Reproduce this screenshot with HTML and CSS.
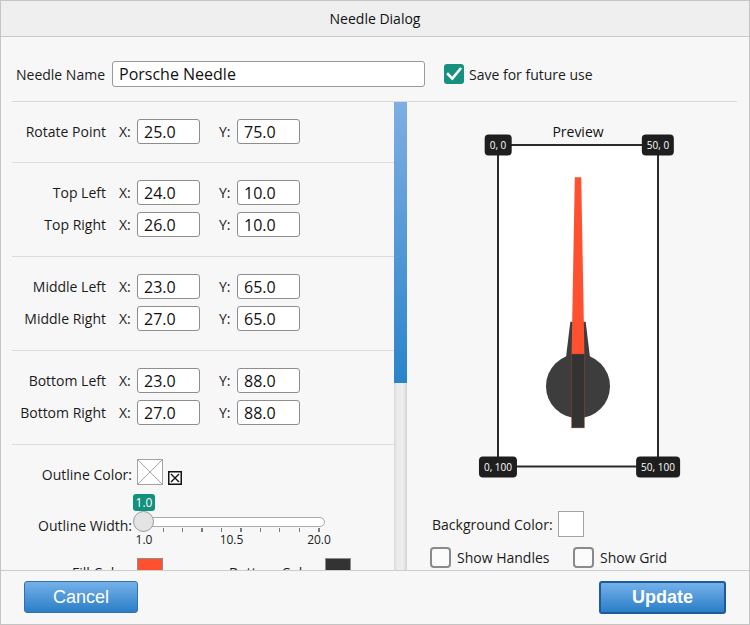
FILE: index.html
```html
<!DOCTYPE html>
<html>
<head>
<meta charset="utf-8">
<title>Needle Dialog</title>
<link rel="stylesheet" href="styles.css">
</head>
<body>
<div class="window">
  <div class="titlebar">Needle Dialog</div>
  <div class="content">
    <div class="name-row">
      <span class="name-label">Needle Name</span>
      <input class="name-input" type="text" value="Porsche Needle">
      <span class="check checked">
        <svg width="20" height="20" viewBox="0 0 20 20"><path d="M4 10.2 L8.3 14.6 L16.2 5" fill="none" stroke="#fff" stroke-width="2.6" stroke-linecap="square"/></svg>
      </span>
      <span class="check-text">Save for future use</span>
    </div>
    <div class="main">
      <div class="left">
        <div class="section first">
          <div class="row"><span class="lbl">Rotate Point</span><span class="axis">X:</span><input class="field" value="25.0"><span class="axis y">Y:</span><input class="field" value="75.0"></div>
        </div>
        <div class="section">
          <div class="row"><span class="lbl">Top Left</span><span class="axis">X:</span><input class="field" value="24.0"><span class="axis y">Y:</span><input class="field" value="10.0"></div>
          <div class="row"><span class="lbl">Top Right</span><span class="axis">X:</span><input class="field" value="26.0"><span class="axis y">Y:</span><input class="field" value="10.0"></div>
        </div>
        <div class="section">
          <div class="row"><span class="lbl">Middle Left</span><span class="axis">X:</span><input class="field" value="23.0"><span class="axis y">Y:</span><input class="field" value="65.0"></div>
          <div class="row"><span class="lbl">Middle Right</span><span class="axis">X:</span><input class="field" value="27.0"><span class="axis y">Y:</span><input class="field" value="65.0"></div>
        </div>
        <div class="section">
          <div class="row"><span class="lbl">Bottom Left</span><span class="axis">X:</span><input class="field" value="23.0"><span class="axis y">Y:</span><input class="field" value="88.0"></div>
          <div class="row"><span class="lbl">Bottom Right</span><span class="axis">X:</span><input class="field" value="27.0"><span class="axis y">Y:</span><input class="field" value="88.0"></div>
        </div>
        <div class="section last">
          <div class="color-row">
            <span class="lbl2">Outline Color:</span>
            <span class="swatch none">
              <svg width="26" height="26" viewBox="0 0 26 26"><rect x="0.5" y="0.5" width="25" height="25" fill="#fff" stroke="#a3a3a3"/><path d="M1 1 L25 25 M25 1 L1 25" stroke="#a8a8a8" stroke-width="1"/></svg>
            </span>
            <span class="clear-icon">
              <svg width="14" height="14" viewBox="0 0 14 14"><rect x="0.75" y="0.75" width="12.5" height="12.5" fill="#fff" stroke="#111" stroke-width="1.5"/><path d="M3 3 L11 11 M11 3 L3 11" stroke="#111" stroke-width="1.4"/></svg>
            </span>
          </div>
          <div class="badge">1.0</div>
          <div class="slider-row">
            <span class="lbl2 slider-label">Outline Width:</span>
            <div class="slider">
              <div class="track"></div>
              <div class="ticks"></div>
              <div class="thumb"></div>
            </div>
          </div>
          <div class="tick-labels"><span>1.0</span><span>10.5</span><span>20.0</span></div>
          <div class="fill-row">
            <span class="lbl2 low">Fill Color:</span>
            <span class="swatch fill"></span>
            <span class="lbl3 low">Bottom Color:</span>
            <span class="swatch bottom"></span>
          </div>
        </div>
      </div>
      <div class="scrollbar"><div class="scroll-thumb"></div></div>
      <div class="right">
        <div class="preview-title">Preview</div>
        <div class="canvas">
          <svg width="166" height="328" viewBox="0 0 166 328">
            <rect x="3" y="3" width="160" height="321.5" fill="#fff" stroke="#2b2b2b" stroke-width="2"/>
            <g transform="translate(3 3) scale(3.2 3.215)">
              <polygon points="22.6,55 27.4,55 28.8,66.5 21.2,66.5" fill="#3d3d3d"/>
              <circle cx="25" cy="75" r="10" fill="#3d3d3d"/>
              <polygon points="24,10 26,10 27,65 23,65" fill="#ff5130"/>
              <rect x="23" y="65" width="4" height="23" fill="#333333" stroke="#b9442f" stroke-width="0.12"/>
            </g>
          </svg>
          <span class="handle tl">0, 0</span>
          <span class="handle tr">50, 0</span>
          <span class="handle bl">0, 100</span>
          <span class="handle br">50, 100</span>
        </div>
        <div class="bg-row">
          <span class="bg-label">Background Color:</span>
          <span class="swatch white"></span>
        </div>
        <div class="opt-row">
          <span class="opt first-opt"><span class="box"></span><span class="opt-text">Show Handles</span></span>
          <span class="opt"><span class="box"></span><span class="opt-text">Show Grid</span></span>
        </div>
      </div>
    </div>
  </div>
  <div class="footer">
    <button class="btn cancel">Cancel</button>
    <button class="btn update">Update</button>
  </div>
</div>
</body>
</html>
```

FILE: styles.css
```css
* { box-sizing: border-box; }

body {
  margin: 0;
  background: #ffffff;
}

.window {
  width: 750px;
  height: 625px;
  border: 1px solid #c4c4c4;
  background: #f7f7f7;
  display: flex;
  flex-direction: column;
  font-family: "Open Sans", "Noto Sans", sans-serif;
  font-size: 14px;
  color: #1b1b1b;
  overflow: hidden;
}

.titlebar {
  flex: none;
  height: 36px;
  background: #efefef;
  border-bottom: 1px solid #c8c8c8;
  text-align: center;
  line-height: 36px;
  color: #111;
}

.content {
  flex: 1;
  min-height: 0;
  display: flex;
  flex-direction: column;
  padding: 0 12px 0 11px;
}

/* ---------- name row ---------- */
.name-row {
  flex: none;
  height: 65px;
  display: flex;
  align-items: center;
  padding: 24px 0 14px;
  border-bottom: 1px solid #dadada;
}

.name-label {
  width: 100px;
  padding-left: 4px;
  white-space: nowrap;
}

.name-input {
  width: 313px;
  height: 26px;
  border: 1px solid #9a9a9a;
  border-radius: 3px;
  background: #fff;
  font-family: "Open Sans", "Noto Sans", sans-serif;
  font-size: 16px;
  color: #111;
  padding: 0 6px;
  margin: 0;
  outline: none;
}

.check {
  width: 20px;
  height: 20px;
  margin-left: 19px;
  border-radius: 3px;
  display: flex;
  align-items: center;
  justify-content: center;
}

.check.checked {
  background: #16907f;
}

.check-text {
  margin-left: 5px;
  white-space: nowrap;
}

/* ---------- main ---------- */
.main {
  flex: 1;
  min-height: 0;
  display: flex;
}

.left {
  width: 382px;
  flex: none;
  overflow: hidden;
}

.section {
  display: flex;
  flex-direction: column;
  gap: 7px;
  padding: 17px 0 19px;
  border-bottom: 1px solid #dcdcdc;
}

.section.first {
  padding-bottom: 18px;
}

.section.last {
  border-bottom: none;
  padding: 14px 0 0;
  gap: 0;
}

.row {
  display: flex;
  align-items: center;
  height: 25px;
}

.lbl {
  width: 94px;
  text-align: right;
  white-space: nowrap;
}

.axis {
  width: 18px;
  margin-left: 13px;
}

.axis.y {
  margin-left: 19px;
}

.field {
  width: 63px;
  height: 25px;
  margin: 0;
  border: 1px solid #8e8e8e;
  border-radius: 3px;
  background: #fff;
  font-family: "Open Sans", "Noto Sans", sans-serif;
  font-size: 16px;
  color: #111;
  padding: 0 6px;
  outline: none;
}

.color-row {
  display: flex;
  align-items: flex-end;
  height: 26px;
}

.lbl2 {
  width: 120px;
  text-align: right;
  line-height: 20px;
  white-space: nowrap;
}

.swatch {
  width: 26px;
  height: 26px;
  margin-left: 5px;
  flex: none;
  display: block;
}

.swatch svg { display: block; }

.clear-icon {
  width: 14px;
  height: 14px;
  margin-left: 5px;
  display: block;
}

.clear-icon svg { display: block; }

.badge {
  margin-top: 9px;
  margin-left: 121px;
  width: 22px;
  height: 17px;
  border-radius: 3px;
  background: #12917f;
  color: #fff;
  font-size: 12px;
  line-height: 17px;
  text-align: center;
}

.slider-row {
  display: flex;
  align-items: flex-start;
  height: 21px;
}

.slider-label {
  margin-top: 5px;
}

.slider {
  position: relative;
  width: 192px;
  height: 21px;
  margin-left: 1px;
}

.track {
  margin-left: 3px;
  margin-top: 6px;
  width: 189px;
  height: 10px;
  border: 1px solid #a9a9a9;
  border-radius: 5px;
  background: #fff;
}

.ticks {
  margin-top: 1px;
  margin-left: 10px;
  width: 177px;
  height: 4px;
  background: repeating-linear-gradient(to right, #7a7a7a 0 1px, transparent 1px 19.5px);
}

.thumb {
  position: absolute;
  left: 0;
  top: 0;
  width: 21px;
  height: 21px;
  border-radius: 50%;
  background: #e4e4e4;
  border: 1px solid #9a9a9a;
}

.tick-labels {
  display: flex;
  gap: 47.5px;
  margin-left: 112px;
  font-size: 12px;
  line-height: 16px;
  color: #222;
}

.tick-labels span {
  width: 40px;
  text-align: center;
}

.fill-row {
  display: flex;
  align-items: flex-start;
  height: 26px;
  margin-top: 10px;
}

.lbl3 {
  width: 157px;
  text-align: right;
  line-height: 20px;
  white-space: nowrap;
}

.low {
  padding-top: 5px;
}

.swatch.fill {
  background: #ff5130;
  border: 1px solid #8d8d8d;
}

.swatch.bottom {
  background: #333333;
  border: 1px solid #8d8d8d;
}

/* ---------- scrollbar ---------- */
.scrollbar {
  flex: none;
  width: 13px;
  background: linear-gradient(to right, #d9d9d9, #ececec 25%, #ededed 70%, #d3d3d3);
}

.scroll-thumb {
  height: 281px;
  background: linear-gradient(#7eaee3, #2a84ca);
}

/* ---------- right pane ---------- */
.right {
  flex: 1;
  min-width: 0;
  display: flex;
  flex-direction: column;
  padding: 20px 11px 0 23px;
}

.preview-title {
  text-align: center;
  line-height: 20px;
  color: #111;
}

.canvas {
  position: relative;
  align-self: center;
  width: 166px;
  height: 328px;
}

.canvas svg { display: block; }

.handle {
  position: absolute;
  transform: translate(-50%, -50%);
  height: 21px;
  padding: 0 5px;
  border-radius: 4px;
  background: #1e1e1e;
  color: #fff;
  font-size: 10px;
  line-height: 21px;
  white-space: nowrap;
}

.handle.tl { left: 3px; top: 3px; }
.handle.tr { left: 163px; top: 3px; }
.handle.bl { left: 3px; top: 324.5px; }
.handle.br { left: 163px; top: 324.5px; }

.bg-row {
  display: flex;
  align-items: center;
  height: 26px;
  margin-top: 41px;
}

.bg-label {
  margin-left: 2px;
  white-space: nowrap;
}

.swatch.white {
  background: #fff;
  border: 1px solid #a3a3a3;
}

.opt-row {
  display: flex;
  align-items: center;
  height: 21px;
  margin-top: 10px;
}

.opt {
  display: flex;
  align-items: center;
}

.opt.first-opt {
  width: 143px;
}

.box {
  width: 21px;
  height: 21px;
  border: 2px solid #8a8a8a;
  border-radius: 4px;
  background: #fbfbfb;
}

.opt-text {
  margin-left: 6px;
  white-space: nowrap;
}

/* ---------- footer ---------- */
.footer {
  flex: none;
  height: 54px;
  border-top: 1px solid #cdcdcd;
  display: flex;
  justify-content: space-between;
  align-items: flex-start;
  padding: 10px 23px 0 23px;
}

.btn {
  margin: 0;
  font-family: "Liberation Sans", Arial, sans-serif;
  font-size: 18px;
  color: #fff;
  border-radius: 3px;
  background: linear-gradient(#74b1e9, #2b7ec7);
  padding: 0;
}

.btn.cancel {
  width: 114px;
  height: 32px;
  border: 1px solid #3270ae;
}

.btn.update {
  width: 127px;
  height: 33px;
  border: 2px solid #1c5c9c;
  font-weight: bold;
}
```
